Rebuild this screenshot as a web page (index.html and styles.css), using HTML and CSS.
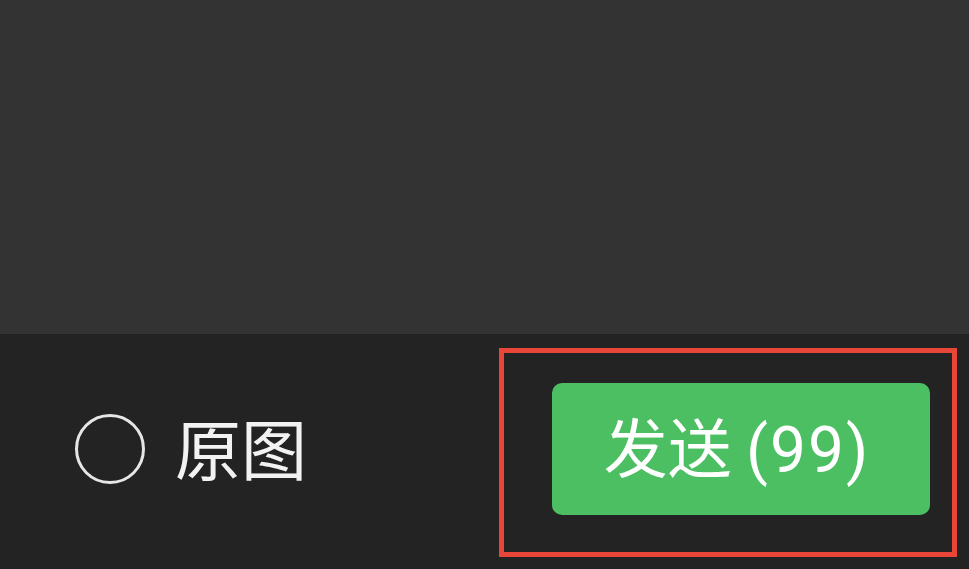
FILE: index.html
```html
<!DOCTYPE html>
<html lang="zh-CN">
<head>
    <meta charset="UTF-8">
    <meta name="viewport" content="width=device-width, initial-scale=1.0">
    <title>发送</title>
    <link rel="stylesheet" href="styles.css">
</head>
<body>
    <div class="preview"></div>

    <footer class="toolbar">
        <label class="original">
            <span class="radio"></span>
            <span class="original-text">原图</span>
        </label>

        <!-- highlighted send button -->
        <div class="highlight">
            <button class="send-button">发送 <span class="count">(99)</span></button>
        </div>
    </footer>
</body>
</html>
```

FILE: styles.css
```css
body {
    margin: 0;
    padding: 0;
    width: 969px;
    height: 569px;
    overflow: hidden;
    background-color: #232323;
    font-family: "Noto Sans CJK SC", "Noto Sans", sans-serif;
}

.preview {
    height: 334px;
    background-color: #333333;
}

.toolbar {
    height: 235px;
    box-sizing: border-box;
    display: flex;
    justify-content: space-between;
    align-items: center;
    padding: 14px 12px 12px 75px;
    background-color: #232323;
}

.original {
    display: flex;
    align-items: center;
    gap: 30px;
    margin-bottom: 10px;
    color: #f2f2f2;
}

.radio {
    width: 64px;
    height: 64px;
    border: 3px solid #e6e6e6;
    border-radius: 50%;
    margin-top: 2px;
}

.original-text {
    font-size: 66px;
    line-height: 1;
    margin-top: -4px;
}

.highlight {
    box-sizing: border-box;
    width: 458px;
    height: 209px;
    border: 5px solid #e9463a;
    padding: 30px 22px 37px 48px;
}

.send-button {
    width: 100%;
    height: 100%;
    border: none;
    border-radius: 10px;
    background-color: #4bbf62;
    color: #ffffff;
    font-family: "Noto Sans CJK SC", "Noto Sans", sans-serif;
    font-size: 64px;
    line-height: 1;
    padding: 0 8px 4px 0;
    cursor: pointer;
}

.send-button .count {
    font-family: "Roboto", "Noto Sans", sans-serif;
    letter-spacing: 2px;
}
```
